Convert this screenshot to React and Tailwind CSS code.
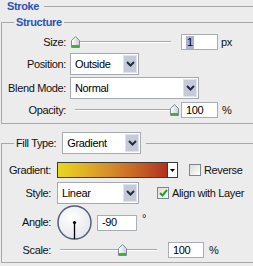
import React from "react";

function Chevron() {
  return (
    <svg width="9" height="6" viewBox="0 0 9 6">
      <path d="M1 1 L4.5 4.5 L8 1" fill="none" stroke="#1f2a44" strokeWidth="2" />
    </svg>
  );
}

function Select({ w, text }) {
  return (
    <div className={`flex h-[22px] ${w} border border-[#a4a9b3] bg-white`}>
      <div className="flex flex-1 items-center pl-[4px] pt-[1px] text-[11px] text-black">{text}</div>
      <div className="m-px flex w-[14px] items-center justify-center border border-[#dfe3ee] bg-[#c6cad6]">
        <Chevron />
      </div>
    </div>
  );
}

function Input({ w, children }) {
  return (
    <div className={`flex h-[16px] ${w} items-center border border-[#a9aeb6] bg-white pl-[4px] text-[11px] text-black`}>
      {children}
    </div>
  );
}

function Thumb() {
  return (
    <svg width="9" height="12" viewBox="0 0 9 12">
      <defs>
        <linearGradient id="tg" x1="0" y1="0" x2="1" y2="0">
          <stop offset="0" stopColor="#ffffff" />
          <stop offset="1" stopColor="#c9ced6" />
        </linearGradient>
      </defs>
      <polygon points="0.5,4.5 4.5,0.5 8.5,4.5 8.5,11.5 0.5,11.5" fill="url(#tg)" stroke="#7f8a98" />
      <rect x="1" y="9" width="7" height="2.5" fill="#3fae3f" />
    </svg>
  );
}

function Slider({ trackClass, thumbClass }) {
  return (
    <div className="relative h-[16px] w-[108px]">
      <div className={`absolute top-[7px] h-[2px] border-t border-[#a8a8a8] bg-white ${trackClass}`} />
      <div className={`absolute top-[2px] ${thumbClass}`}>
        <Thumb />
      </div>
    </div>
  );
}

function Checkbox({ checked }) {
  return (
    <div className="flex h-[12px] w-[12px] items-center justify-center border border-[#7b8799] bg-gradient-to-br from-[#dcdcd4] to-white">
      {checked && (
        <svg width="9" height="8" viewBox="0 0 9 8">
          <path d="M1 4 L3.5 6.5 L8 1" fill="none" stroke="#22a022" strokeWidth="2" />
        </svg>
      )}
    </div>
  );
}

export default function App() {
  return (
    <div
      className="h-[266px] w-[253px] overflow-hidden bg-[#ececec] text-[11px] leading-[13px] tracking-[-0.35px] text-[#111]"
      style={{ fontFamily: '"Liberation Sans", Arial, sans-serif' }}
    >
      {/* Stroke header */}
      <div className="flex h-[13px] items-center pl-[7px]">
        <span className="font-bold text-[#2a53b3]">Stroke</span>
        <div className="ml-[5px] h-px flex-1 bg-[#a8a8a8]" />
      </div>

      {/* Structure */}
      <fieldset className="ml-[1px] mt-[3px] w-[252px] border border-r-0 border-[#a8a8a8] pb-[5px]">
        <legend className="ml-[12px] px-[2px] font-bold text-[#2a53b3]">Structure</legend>

        <div className="mt-[5px] flex h-[16px] items-center">
          <div className="w-[64px] text-right">Size:</div>
          <div className="ml-[5px]">
            <Slider trackClass="left-[3px] w-[97px]" thumbClass="left-0" />
          </div>
          <div className="ml-[2px]">
            <Input w="w-[37px]">
              <span className="bg-[#aab3c9] px-px">1</span>
            </Input>
          </div>
          <span className="ml-[3px]">px</span>
        </div>

        <div className="mt-[3px] flex h-[22px] items-center">
          <div className="w-[64px] text-right">Position:</div>
          <div className="ml-[4px]">
            <Select w="w-[69px]" text="Outside" />
          </div>
        </div>

        <div className="mt-[2px] flex h-[22px] items-center">
          <div className="w-[64px] text-right">Blend Mode:</div>
          <div className="ml-[4px]">
            <Select w="w-[129px]" text="Normal" />
          </div>
        </div>

        <div className="mt-[3px] flex h-[16px] items-center">
          <div className="w-[64px] text-right">Opacity:</div>
          <div className="ml-[5px]">
            <Slider trackClass="left-[4px] w-[96px]" thumbClass="left-[99px]" />
          </div>
          <div className="ml-[2px]">
            <Input w="w-[37px]">100</Input>
          </div>
          <span className="ml-[4px]">%</span>
        </div>
      </fieldset>

      {/* Fill type */}
      <fieldset className="ml-[1px] mt-[8px] w-[252px] border border-r-0 border-[#a8a8a8] pb-[4px]">
        <legend className="ml-[12px] pl-[2px] pr-[5px]">
          <div className="flex items-center">
            <span>Fill Type:</span>
            <div className="ml-[6px]">
              <Select w="w-[79px]" text="Gradient" />
            </div>
          </div>
        </legend>

        <div className="mt-[8px] flex h-[16px] items-center">
          <div className="w-[49px] text-right">Gradient:</div>
          <div className="ml-[6px] flex h-[16px] w-[121px] border border-[#3a3a3a]">
            <div className="flex-1 bg-gradient-to-r from-[#e9d81c] via-[#d4892a] to-[#b0301f]" />
            <div className="flex w-[10px] items-center justify-center border-l border-[#3a3a3a] bg-white">
              <svg width="5" height="3" viewBox="0 0 5 3">
                <polygon points="0,0 5,0 2.5,3" fill="#000" />
              </svg>
            </div>
          </div>
          <div className="ml-[11px]">
            <Checkbox />
          </div>
          <span className="ml-[3px]">Reverse</span>
        </div>

        <div className="mt-[4px] flex h-[22px] items-center">
          <div className="w-[49px] text-right">Style:</div>
          <div className="ml-[6px]">
            <Select w="w-[82px]" text="Linear" />
          </div>
          <div className="ml-[18px]">
            <Checkbox checked />
          </div>
          <span className="ml-[3px]">Align with Layer</span>
        </div>

        <div className="mt-[1px] flex h-[35px] items-center">
          <div className="w-[49px] text-right">Angle:</div>
          <div className="ml-[6px]">
            <svg width="35" height="35" viewBox="0 0 35 35">
              <defs>
                <radialGradient id="cg" cx="0.4" cy="0.35" r="0.7">
                  <stop offset="0" stopColor="#ffffff" />
                  <stop offset="1" stopColor="#e4e6ea" />
                </radialGradient>
              </defs>
              <circle cx="17.5" cy="17.5" r="16.5" fill="url(#cg)" stroke="#52607c" strokeWidth="1.5" />
              <line x1="17.5" y1="17.5" x2="17.5" y2="34" stroke="#000" strokeWidth="1.3" />
              <circle cx="17.5" cy="17.5" r="1.6" fill="#000" />
            </svg>
          </div>
          <div className="ml-[5px]">
            <Input w="w-[40px]">-90</Input>
          </div>
          <span className="mb-[8px] ml-[5px]">°</span>
        </div>

        <div className="mt-[2px] flex h-[16px] items-center">
          <div className="w-[49px] text-right">Scale:</div>
          <div className="ml-[6px]">
            <Slider trackClass="left-[3px] w-[97px]" thumbClass="left-[61px]" />
          </div>
          <div className="ml-[3px]">
            <Input w="w-[36px]">100</Input>
          </div>
          <span className="ml-[5px]">%</span>
        </div>
      </fieldset>
    </div>
  );
}
